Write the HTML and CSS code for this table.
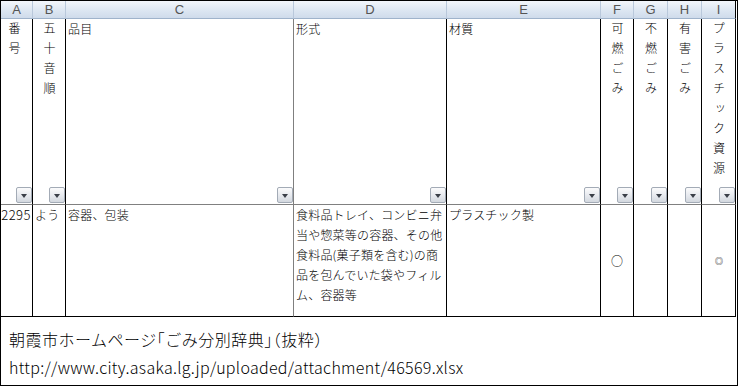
FILE: index.html
```html
<!DOCTYPE html>
<html lang="ja">
<head>
<meta charset="utf-8">
<title>ごみ分別辞典</title>
<link rel="stylesheet" href="styles.css">
</head>
<body>
<div class="sheet">
  <div class="grid">
    <div class="hd">A</div>
    <div class="hd">B</div>
    <div class="hd">C</div>
    <div class="hd">D</div>
    <div class="hd">E</div>
    <div class="hd">F</div>
    <div class="hd">G</div>
    <div class="hd">H</div>
    <div class="hd hd-last">I</div>

    <div class="cell head"><div class="vt vt-a">番号</div><span class="fb"></span></div>
    <div class="cell head"><div class="vt">五十音順</div><span class="fb"></span></div>
    <div class="cell head gray-r"><div class="ht">品目</div><span class="fb"></span></div>
    <div class="cell head"><div class="ht">形式</div><span class="fb"></span></div>
    <div class="cell head"><div class="ht">材質</div><span class="fb"></span></div>
    <div class="cell head"><div class="vt">可燃ごみ</div><span class="fb"></span></div>
    <div class="cell head"><div class="vt">不燃ごみ</div><span class="fb"></span></div>
    <div class="cell head"><div class="vt">有害ごみ</div><span class="fb"></span></div>
    <div class="cell head"><div class="vt">プラスチック資源</div><span class="fb"></span></div>

    <div class="cell data num">2295</div>
    <div class="cell data">よう</div>
    <div class="cell data gray-r">容器、包装</div>
    <div class="cell data">食料品トレイ、コンビニ弁<br>当や惣菜等の容器、その他<br>食料品(菓子類を含む)の商<br>品を包んでいた袋やフィル<br>ム、容器等</div>
    <div class="cell data">プラスチック製</div>
    <div class="cell data mark"><span class="circle">○</span></div>
    <div class="cell data mark"></div>
    <div class="cell data mark"></div>
    <div class="cell data mark"><span class="dcircle">◎</span></div>
  </div>
  <div class="note">
    <p class="title">朝霞市ホームページ<span class="br">「</span>ごみ分別辞典<span class="br">」</span>（抜粋）</p>
    <p class="url">http://www.city.asaka.lg.jp/uploaded/attachment/46569.xlsx</p>
  </div>
</div>
</body>
</html>
```

FILE: styles.css
```css
* { box-sizing: border-box; }
html, body { margin: 0; padding: 0; background: #fff; }
body { font-family: "Noto Sans CJK JP", "Noto Sans", sans-serif; color: #000; }

.sheet {
  width: 738px;
  height: 386px;
  border: 1px solid #000;
  display: flex;
  flex-direction: column;
}

.grid {
  display: grid;
  grid-template-columns: 32px 33px 228px 153px 154px 33px 34px 34px 34px;
  grid-template-rows: 18px 186px 112px;
  width: 735px;
}

.hd {
  background: linear-gradient(#f3f6fb, #dbe5f1 60%, #cfdbeb);
  border-right: 1px solid #b9c8db;
  border-bottom: 1px solid #9fb3cb;
  font-family: "Liberation Sans", sans-serif;
  font-size: 13px;
  line-height: 17px;
  color: #555;
  text-align: center;
}
.hd-last { border-right: 1px solid #000; }

.cell {
  border-right: 1px solid #000;
  font-size: 12px;
  font-weight: 300;
  letter-spacing: 0.2px;
}
.gray-r { border-right-color: #7f7f7f; }

.head {
  display: flex;
  flex-direction: column;
  border-bottom: 1px solid #808080;
  padding-top: 3px;
}

.vt {
  writing-mode: vertical-rl;
  text-orientation: upright;
  letter-spacing: 8px;
  line-height: 12px;
  align-self: center;
}
.vt-a { align-self: flex-start; margin-left: 7px; }

.ht {
  line-height: 14px;
  padding-left: 2px;
}

.fb {
  margin-top: auto;
  margin-bottom: 1px;
  align-self: flex-end;
  width: 16px;
  height: 16px;
  border: 1px solid #a3abb6;
  border-radius: 2px;
  background: linear-gradient(#fbfbfc, #e6e9ee 55%, #d3d8df);
  display: flex;
  align-items: center;
  justify-content: center;
}
.fb::after {
  content: "";
  width: 0;
  height: 0;
  border-left: 3.5px solid transparent;
  border-right: 3.5px solid transparent;
  border-top: 4px solid #3a3f48;
  margin-top: 1px;
}

.data {
  border-bottom: 1px solid #000;
  line-height: 20px;
  padding-left: 2px;
  white-space: nowrap;
}
.num {
  font-size: 13px;
  letter-spacing: 0.5px;
  text-align: right;
  padding: 0 1px 0 0;
}

.mark {
  display: flex;
  align-items: center;
  justify-content: center;
  padding-left: 0;
}
.circle { font-size: 12px; line-height: 12px; font-weight: 400; color: #000; }
.dcircle { font-size: 8px; line-height: 8px; font-weight: 400; margin-left: 1px; color: #000; }

.note {
  flex: 1;
  padding: 12px 0 0 8px;
  font-weight: 300;
}
.note p { margin: 0; white-space: nowrap; }
.note .title { font-size: 16px; line-height: 20px; letter-spacing: 0.5px; }
.br { font-feature-settings: "halt"; }
.note .url { font-size: 16px; line-height: 20px; margin-top: 8px; letter-spacing: 0.3px; }
```
